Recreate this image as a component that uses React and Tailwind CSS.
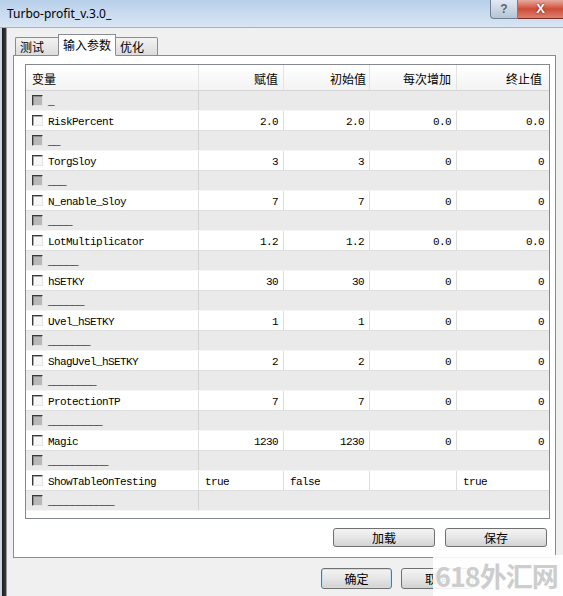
import React from 'react'

const MONO = { fontFamily: '"Liberation Mono", "DejaVu Sans Mono", monospace' }
const CJK = { fontFamily: '"Noto Sans CJK SC", "Liberation Sans", sans-serif' }

// each input: name, then value / start / step / stop; separators carry only underscores
const PARAMS = [
  { sep: 1 },
  { name: 'RiskPercent', v: ['2.0', '2.0', '0.0', '0.0'] },
  { sep: 2 },
  { name: 'TorgSloy', v: ['3', '3', '0', '0'] },
  { sep: 3 },
  { name: 'N_enable_Sloy', v: ['7', '7', '0', '0'] },
  { sep: 4 },
  { name: 'LotMultiplicator', v: ['1.2', '1.2', '0.0', '0.0'] },
  { sep: 5 },
  { name: 'hSETKY', v: ['30', '30', '0', '0'] },
  { sep: 6 },
  { name: 'Uvel_hSETKY', v: ['1', '1', '0', '0'] },
  { sep: 7 },
  { name: 'ShagUvel_hSETKY', v: ['2', '2', '0', '0'] },
  { sep: 8 },
  { name: 'ProtectionTP', v: ['7', '7', '0', '0'] },
  { sep: 9 },
  { name: 'Magic', v: ['1230', '1230', '0', '0'] },
  { sep: 10 },
  { name: 'ShowTableOnTesting', v: ['true', 'false', '', 'true'], bool: true },
  { sep: 11 },
]

function Check({ disabled }) {
  return (
    <span
      className={`block w-[11px] h-[11px] shrink-0 border-t border-l border-t-[#3a3a3a] border-l-[#3a3a3a] border-b border-r border-b-[#e4e4e4] border-r-[#e4e4e4] ${
        disabled ? 'bg-[#b9b9b9] shadow-[inset_1px_1px_0_#8a8a8a]' : 'bg-[#f7f7f7] shadow-[inset_1px_1px_0_#a8a8a8]'
      }`}
    />
  )
}

function Row({ p }) {
  if (p.sep) {
    return (
      <div className="grid grid-cols-[173px_85px_86px_87px_92px] h-5 bg-[#eaeaea] border-b border-[#f6f6f6]">
        <div className="flex items-center pl-[6px] gap-[5px] border-r border-[#d2d2d2]">
          <Check disabled />
          <span className="text-[11px] tracking-[-0.6px] leading-none text-black pt-[4px]" style={MONO}>{'_'.repeat(p.sep)}</span>
        </div>
        <div className="col-span-4" />
      </div>
    )
  }
  return (
    <div className="grid grid-cols-[173px_85px_86px_87px_92px] h-5 bg-white border-b border-[#dedede] text-[11px] tracking-[-0.6px] text-black" style={MONO}>
      <div className="flex items-center pl-[6px] gap-[5px] border-r border-[#dcdcdc]">
        <Check />
        <span className="leading-none pt-[3px]">{p.name}</span>
      </div>
      {p.v.map((val, i) => (
        <div
          key={i}
          className={`flex items-center pt-[3px] border-r border-[#dcdcdc] last:border-r-0 ${p.bool ? 'justify-start pl-[6px]' : 'justify-end pr-[5px]'}`}
        >
          {val}
        </div>
      ))}
    </div>
  )
}

function Btn({ children, className = '' }) {
  return (
    <button
      className={`h-[19px] rounded-[3px] border border-[#707070] bg-gradient-to-b from-[#f4f4f4] via-[#e6e6e6] to-[#d2d2d2] text-[12px] leading-none text-black flex items-center justify-center ${className}`}
      style={CJK}
    >
      {children}
    </button>
  )
}

export default function App() {
  return (
    <div className="relative w-[563px] h-[596px] overflow-hidden bg-[#f0f0f0] flex flex-col">
      {/* title bar */}
      <div className="h-[28px] shrink-0 flex items-start bg-gradient-to-b from-[#b7cfe9] via-[#c9dbef] to-[#d8e5f3] border-b border-[#9fb2c8]">
        <span
          className="pl-[7px] pt-[5px] text-[12px] text-black"
          style={{ fontFamily: '"Noto Sans", "Liberation Sans", sans-serif' }}
        >
          Turbo-profit_v.3.0_
        </span>
        <div className="ml-auto flex">
          <div className="w-[28px] h-[19px] rounded-bl-[4px] border border-t-0 border-[#6f7f95] bg-gradient-to-b from-[#e2e9f2] to-[#b6c4d4] flex items-center justify-center text-[12px] font-bold text-[#5b6472]" style={{ fontFamily: '"Liberation Sans", sans-serif' }}>
            ?
          </div>
          <div className="w-[45px] h-[19px] border-b border-[#7a2c22] bg-gradient-to-b from-[#e6a99f] via-[#cf4a36] to-[#d9806f] flex items-center justify-center text-[13px] font-bold text-white [text-shadow:0_0_2px_#5a1a10]" style={{ fontFamily: '"Liberation Sans", sans-serif' }}>
            X
          </div>
        </div>
      </div>

      <div className="flex flex-1">
        {/* window frame, left */}
        <div className="w-[7px] shrink-0 flex">
          <div className="w-[2px] bg-[#c9d5e3]" />
          <div className="w-[4px] bg-gradient-to-r from-[#1c1c1c] to-[#3a3a3a]" />
          <div className="w-[1px] bg-[#9a9a9a]" />
        </div>

        <div className="flex-1 flex flex-col">
          {/* tabs */}
          <div className="h-[27px] pl-[8px] flex items-end" style={CJK}>
            <div className="w-[43px] h-[19px] mb-[-1px] border border-[#898c95] border-r-0 rounded-tl-[2px] bg-gradient-to-b from-[#f3f3f3] to-[#dcdcdc] text-[12px] leading-none pl-[4px] pt-[3px]">
              测试
            </div>
            <div className="relative z-10 w-[58px] h-[22px] mb-[-1px] border border-[#898c95] border-b-white bg-white text-[12px] leading-none pl-[4px] pt-[4px]">
              输入参数
            </div>
            <div className="w-[42px] h-[19px] mb-[-1px] border border-[#898c95] border-l-0 rounded-tr-[2px] bg-gradient-to-b from-[#f3f3f3] to-[#dcdcdc] text-[12px] leading-none pl-[4px] pt-[3px]">
              优化
            </div>
          </div>

          {/* tab page */}
          <div className="ml-[6px] w-[543px] h-[503px] border border-[#898c95] bg-white pl-[11px] pt-[8px] flex flex-col">
            <div className="w-[525px] h-[455px] border border-[#828790] bg-white flex flex-col">
              <div
                className="grid grid-cols-[173px_85px_86px_87px_92px] h-[26px] shrink-0 bg-gradient-to-b from-white to-[#f3f3f3] border-b border-[#d5d5d5] text-[12px] text-black"
                style={CJK}
              >
                <div className="flex items-center pl-[6px] pt-[2px] border-r border-[#e3e3e3]">变量</div>
                <div className="flex items-center justify-end pr-[5px] pt-[2px] border-r border-[#e3e3e3]">赋值</div>
                <div className="flex items-center justify-end pr-[3px] pt-[2px] border-r border-[#e3e3e3]">初始值</div>
                <div className="flex items-center justify-end pr-[5px] pt-[2px] border-r border-[#e3e3e3]">每次增加</div>
                <div className="flex items-center justify-end pr-[7px] pt-[2px]">终止值</div>
              </div>
              {PARAMS.map((p, i) => (
                <Row key={i} p={p} />
              ))}
            </div>

            <div className="flex justify-end gap-[10px] pr-[8px] mt-[9px]">
              <Btn className="w-[102px]">加载</Btn>
              <Btn className="w-[102px]">保存</Btn>
            </div>
          </div>

          {/* dialog buttons */}
          <div className="flex gap-[9px] pl-[314px] mt-[10px]">
            <Btn className="w-[71px] h-[21px] border-[#3c7fb1] from-[#e5f4fc] via-[#c4e5f6] to-[#98d1ef] shadow-[inset_0_0_0_1px_#bfe4f8]">确定</Btn>
            <Btn className="w-[72px] h-[21px]">取消</Btn>
          </div>
        </div>
      </div>

      {/* site watermark */}
      <div className="absolute left-[433px] top-[555px] w-[130px] h-[41px] bg-white/90 flex items-center justify-start pl-[2px]">
        <span
          className="whitespace-nowrap text-[27px] font-bold leading-none text-[#cdcdcd] tracking-[-1px]"
          style={{ fontFamily: '"Noto Sans CJK SC", "Noto Sans", sans-serif' }}
        >
          618外汇网
        </span>
      </div>
    </div>
  )
}
